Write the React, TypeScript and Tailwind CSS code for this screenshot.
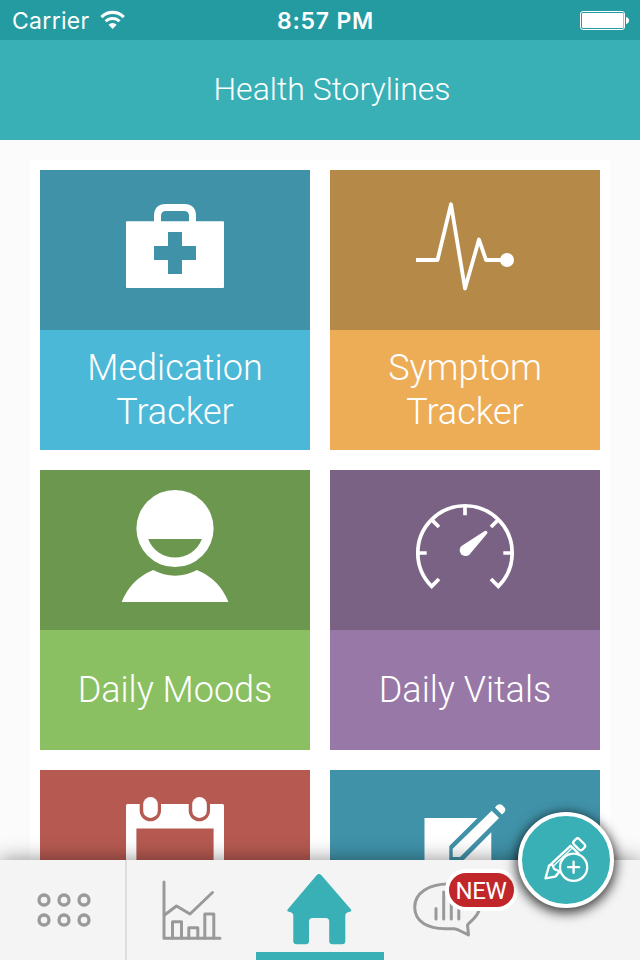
import type { ReactNode } from "react";

type TileProps = {
  title?: string;
  top: string;
  bottom: string;
  children: ReactNode;
};

const Tile = ({ title, top, bottom, children }: TileProps) => {
  return (
    <a className="flex h-[280px] w-[270px] flex-col">
      <div className={`h-40 ${top}`}>
        <svg width="270" height="160" viewBox="0 0 270 160" fill="none">
          {children}
        </svg>
      </div>
      <div className={`flex h-[120px] items-center justify-center px-8 ${bottom}`}>
        {title && (
          <h2 className="text-center text-[36px] leading-[44px] font-light text-white">
            {title}
          </h2>
        )}
      </div>
    </a>
  );
};

const StatusBar = () => {
  return (
    <div className="grid h-10 grid-cols-3 items-center bg-[#239ba1] pr-[11px] pl-3 font-['Inter',sans-serif] text-white">
      <div className="flex items-center gap-2.5">
        <span className="pt-0.5 text-[23px] leading-[38px] tracking-[0.3px]">Carrier</span>
        <svg width="26" height="20" viewBox="0 0 26 20" fill="none" stroke="#fff">
          <path d="M1.5 7.1a15.6 15.6 0 0 1 22.2 0" strokeWidth="3.2" />
          <path d="M5.600 11.3a9.9 9.9 0 0 1 14 0" strokeWidth="3" />
          <path d="M12.600 18.9l-4.1-4.1a5.8 5.8 0 0 1 8.2 0z" fill="#fff" stroke="none" />
        </svg>
      </div>
      <span className="pt-0.5 pl-2.5 text-center text-[23px] leading-[38px] font-semibold tracking-[0.8px] whitespace-nowrap">
        8:57 PM
      </span>
      <svg className="ml-auto" width="49" height="20" viewBox="0 0 49 20" fill="none">
        <rect x="0.5" y="1.5" width="44" height="18" rx="2.5" stroke="#fff" />
        <rect x="2" y="3" width="41.500" height="15" rx="1.3" fill="#fff" />
        <path d="M46 7c2 .4 3 1.600 3 3.500s-1 3.100-3 3.500z" fill="#fff" />
      </svg>
    </div>
  );
};

const TabBar = () => {
  return (
    <nav className="relative z-10 flex h-[100px] bg-[#f4f4f4] shadow-[0_0_20px_rgba(0,0,0,0.45)]">
      <a className="w-[127px] border-r-2 border-[#dedede]">
        <svg width="125" height="100" fill="none" stroke="#999" strokeWidth="3.300">
          <circle cx="44" cy="40" r="5" />
          <circle cx="64" cy="40" r="5" />
          <circle cx="84" cy="40" r="5" />
          <circle cx="44" cy="60" r="5" />
          <circle cx="64" cy="60" r="5" />
          <circle cx="84" cy="60" r="5" />
        </svg>
      </a>
      <a className="w-[129px]">
        <svg
          width="129"
          height="100"
          viewBox="127 0 129 100"
          fill="none"
          stroke="#999"
          strokeWidth="3"
          strokeLinecap="round"
          strokeLinejoin="round"
        >
          <path d="M164 22v56.300h56" />
          <path d="M164.500 55l12-9 13.500 8 22.500-21.500" />
          <path d="M172.500 78V61.800h9V78M188.800 78V67.800h9V78M204.800 78V54h9v24" />
        </svg>
      </a>
      <a className="flex w-32 flex-col">
        <svg width="128" height="92" viewBox="256 0 128 92" fill="#38b0b6">
          <path d="M316.800 14.900q2.200-1.800 4.400 0L351 49.500q1 2-1.200 2.200-4.500.5-4.500 4V81q0 3.300-3.300 3.300h-9.500q-3.300 0-3.300-3.300V61.500q0-3.500-3.500-3.500h-13.400q-3.300 0-3.300 3.500V81q0 3.300-3.300 3.300h-9.100q-3.300 0-3.300-3.300V55.700q0-3.500-4.500-4-2.200-.2-1.200-2.200z" />
        </svg>
        <span className="h-2 bg-[#38b0b6]" />
      </a>
      <a className="relative w-32">
        <svg
          width="128"
          height="100"
          viewBox="384 0 128 100"
          fill="none"
          stroke="#999"
          strokeWidth="3"
          strokeLinecap="round"
          strokeLinejoin="round"
        >
          <path d="M448 24c-19 0-33.300 9-33.300 23 0 15 13.300 22 31.300 21.800 8-.3 9.500-.3 14.500 2.200l8 3.900-1-9.900c.7-2.500 10.500-7 12-16.500C481 33 466 24 448 24z" />
          <path d="M436 48.500V59M443.700 32v27M451.300 32v27M458.800 38v21" />
        </svg>
        <span className="absolute top-[9px] left-[61px] flex h-[42px] w-[73px] items-center justify-center rounded-full border-4 border-white bg-[#c1272a] pt-px pr-px text-[24px] leading-none tracking-[-0.3px] text-white">
          NEW
        </span>
      </a>
    </nav>
  );
};

const AddButton = () => {
  return (
    <button className="absolute top-[812px] left-[518px] z-20 size-24 rounded-full border-4 border-white bg-[#38b0b6] shadow-[0_3px_12px_2px_rgba(0,0,0,0.75)]">
      <svg
        width="88"
        height="88"
        viewBox="522 816 88 88"
        fill="none"
        stroke="#fff"
        strokeWidth="2.300"
        strokeLinejoin="round"
        strokeLinecap="round"
      >
        <path d="M556.500 875.600l-1.500 1-9.500 1.800 3.400-12.200 21.600-20.400 7.800 7.600" />
        <path d="M549 865.500q4-1.500 4.300 1 .2 2.700 2.400 3.200 3 .6 3.600 2.300l-3.300 3.600" />
        <path d="M554.500 865l17-16.300" strokeWidth="1.300" />
        <rect x="-3.800" y="-6" width="7.600" height="12" rx="2.600" transform="translate(579.200 844.300) rotate(-45)" />
        <circle cx="573.600" cy="867.200" r="13.600" />
        <path d="M568 867.200h11.200M573.600 861.600v11.200" />
      </svg>
    </button>
  );
};

const App = () => {
  return (
    <div className="relative h-[960px] w-[640px] overflow-hidden bg-[#fbfbfb] font-['Roboto',sans-serif]">
      <StatusBar />
      <header className="flex h-[100px] items-center justify-center bg-[#38b0b6] pb-0.5 pl-6">
        <h1 className="text-[32px] font-light text-white">Health Storylines</h1>
      </header>

      <main className="h-[720px] overflow-hidden px-[30px] pt-5">
        <div className="grid grid-cols-2 gap-5 bg-white p-2.5">
          <Tile title="Medication Tracker" top="bg-[#4092a9]" bottom="bg-[#4cb8d7]">
            <path d="M117.500 53V46q0-8.500 8.500-8.500h18q8.500 0 8.500 8.500v7" stroke="#fff" strokeWidth="7" />
            <rect x="86" y="51.300" width="98" height="66.700" rx="1" fill="#fff" />
            <path d="M128 62h14v14h14v14h-14v14h-14V90h-14V76h14z" fill="#4092a9" />
          </Tile>

          <Tile title="Symptom Tracker" top="bg-[#b58a49]" bottom="bg-[#edad57]">
            <path
              d="M86 90h21.500L121 34.300l14 84.200 14-49 7 20.500h16"
              stroke="#fff"
              strokeWidth="3.800"
              strokeLinejoin="round"
            />
            <circle cx="177" cy="90" r="7" fill="#fff" />
          </Tile>

          <Tile title="Daily Moods" top="bg-[#6c974f]" bottom="bg-[#8ac062]">
            <circle cx="135" cy="58.500" r="38.600" fill="#fff" />
            <path d="M108.200 69h53.700a28.700 28.700 0 0 1-53.700 0z" fill="#6c974f" />
            <path
              d="M81.700 132a57.300 57.300 0 0 1 31.600-32 44.500 44.500 0 0 0 43.600 0 57.300 57.300 0 0 1 31.500 32z"
              fill="#fff"
            />
          </Tile>

          <Tile title="Daily Vitals" top="bg-[#7a6284]" bottom="bg-[#9878a7]">
            <g stroke="#fff" strokeWidth="3.700">
              <path d="M109 109l-7.300 7.400a47.200 47.200 0 1 1 66.600 0l-7.300-7.400" />
              <path d="M87 83h9.700M173.300 83h9.700M135 36v9.300M101.600 49.600l7.400 7.400M168.400 49.600l-7.400 7.400" />
            </g>
            <path
              d="M131.500 76l23.200-15q1.300-.7 2.200.3t.3 2.200L139.500 84.500a5.700 5.700 0 1 1-8-8.500z"
              fill="#fff"
            />
          </Tile>

          <Tile top="bg-[#b65a51]" bottom="bg-[#ee756b]">
            <rect x="86" y="34" width="98" height="98" rx="1.500" fill="#fff" />
            <path
              d="M96.400 58.400h77.200V122H96.400zM99.700 34h21.300v6.600a10.650 10.650 0 0 1-21.300 0zM148.700 34h21.300v6.600a10.650 10.650 0 0 1-21.300 0z"
              fill="#b65a51"
            />
            <rect x="103.200" y="27" width="14.600" height="21" rx="7.300" fill="#fff" />
            <rect x="152.200" y="27" width="14.600" height="21" rx="7.300" fill="#fff" />
          </Tile>

          <Tile top="bg-[#4092a9]" bottom="bg-[#4cb8d7]">
            <g fill="#fff">
              <path d="M94.500 48h53l-28.200 28v15h13.500l28.500-28.700V125H94.500z" />
              <path d="M161.700 40.700l7.300 7.300-39 39h-7.300v-8.300z" />
              <path d="M165 37.500l2.200-2.200q2.700-2.300 5.300.2l1.600 1.600q2.300 2.600.2 5.200l-2.300 2.200z" />
            </g>
          </Tile>
        </div>
      </main>

      <TabBar />
      <AddButton />
    </div>
  );
};

export default App;
